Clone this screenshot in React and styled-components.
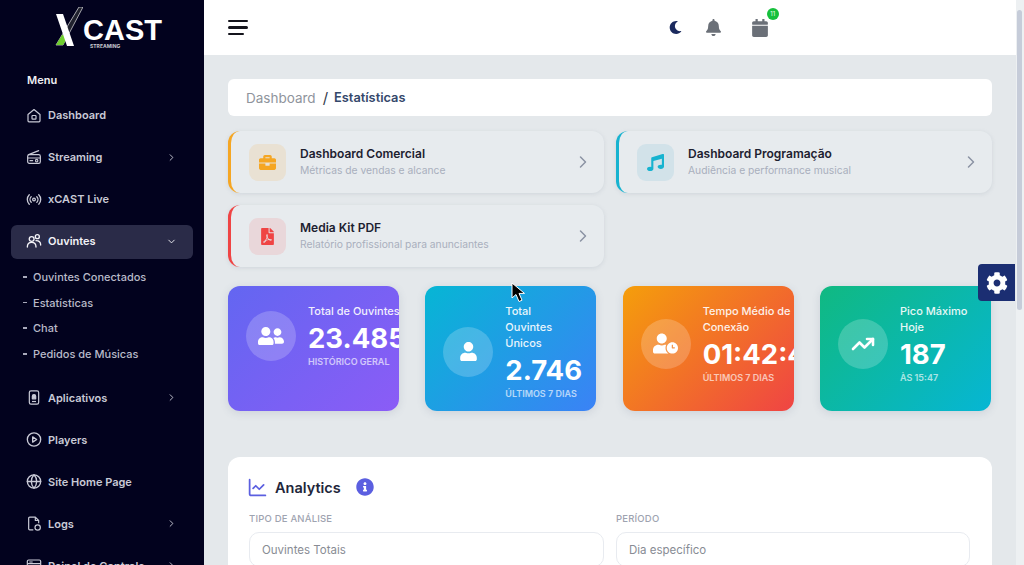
import React from "react";
import styled, { createGlobalStyle } from "styled-components";
import { FaBriefcase, FaMusic, FaFilePdf, FaUserFriends, FaUser, FaUserClock, FaCog, FaMoon, FaBell, FaCalendar, FaInfoCircle } from "react-icons/fa";
import { LuChevronRight, LuChevronDown, LuRadio, LuCirclePlay, LuGlobe, LuChartLine, LuTrendingUp } from "react-icons/lu";

const Global = createGlobalStyle`
  html, body { margin: 0; padding: 0; height: 565px; overflow: hidden; background: #e4e8eb; }
  body { font-family: Inter, "Noto Sans", sans-serif; }
  * { box-sizing: border-box; }
`;

const Page = styled.div`
  position: relative;
  display: flex;
  width: 1024px;
  height: 565px;
  overflow: hidden;
`;

const Sidebar = styled.aside`
  flex: 0 0 204px;
  height: 565px;
  overflow: hidden;
  background: #02021e;
  color: #c9cad6;
`;

const LogoWrap = styled.div`
  height: 66px;
  padding: 7px 0 0 55px;
  display: flex;
  align-items: flex-start;
`;
const LogoMark = styled.svg`
  flex: none;
  width: 28px;
  height: 40px;
`;
const LogoWords = styled.div`
  display: flex;
  flex-direction: column;
  margin: 11px 0 0 0;
`;
const LogoCast = styled.span`
  font: 700 29px/25px "Liberation Sans", sans-serif;
  color: #fff;
`;
const LogoSub = styled.span`
  font: 700 5px/6px Inter, sans-serif;
  color: #c8c8d0;
  margin-left: 7px;
`;

const MenuLabel = styled.div`
  height: 28px;
  padding-left: 27px;
  font-size: 11px;
  line-height: 28px;
  font-weight: 600;
  color: #f1f1f5;
`;

const NavItem = styled.div`
  height: ${p => (p.$active ? "34px" : "42px")};
  margin: ${p => (p.$active ? "5px" : "0")} 11px;
  padding: 0 16px ${p => (p.$active ? "2px" : "0")};
  display: flex;
  align-items: center;
  gap: 5px;
  border-radius: 6px;
  background: ${p => (p.$active ? "#2a2b48" : "transparent")};
  color: ${p => (p.$active ? "#f4f4f8" : "#c9cad6")};
  font-size: 11px;
  font-weight: 600;
  position: relative;
`;
const NavIcon = styled.span`
  flex: none;
  width: 16px;
  height: 18px;
  display: flex;
  align-items: center;
  justify-content: center;
  margin-left: -1px;
  margin-right: 1px;
`;
const NavText = styled.span`
  flex: 1;
  white-space: nowrap;
`;
const SubList = styled.div`
  padding: 0 0 10px 23px;
`;
const SubItem = styled.div`
  height: 25.7px;
  display: flex;
  align-items: center;
  gap: 6px;
  font-size: 11px;
  font-weight: 500;
  color: #b9bac9;
  &::before {
    content: "";
    width: 4px;
    height: 1.5px;
    background: #a9aabb;
  }
`;

const Main = styled.main`
  flex: 1;
  min-width: 0;
  height: 565px;
  overflow: hidden;
  background: #e4e8eb;
`;
const Topbar = styled.header`
  height: 55px;
  background: #fff;
  padding-left: 24px;
  display: flex;
  align-items: center;
  justify-content: space-between;
`;
const Burger = styled.div`
  width: 20px;
  display: flex;
  flex-direction: column;
  gap: 4px;
`;
const BurgerLine = styled.span`
  display: block;
  height: 2.4px;
  width: ${p => p.$w}px;
  background: #14141c;
  border-radius: 2px;
`;
const TopIcons = styled.div`
  display: flex;
  align-items: center;
  padding-right: 247px;
  position: relative;
`;
const TopIcon = styled.span`
  position: relative;
  display: flex;
  margin-left: ${p => p.$gap || 0}px;
  color: ${p => p.$color};
  font-size: ${p => p.$size}px;
`;
const Badge = styled.span`
  position: absolute;
  top: -11px;
  right: -10px;
  width: 12.5px;
  height: 12.5px;
  border-radius: 50%;
  background: #16c03c;
  color: #e8ffe8;
  font-size: 6px;
  line-height: 12.5px;
  text-align: center;
`;

const Content = styled.div`
  padding: 24px 24px 0 24px;
`;
const Breadcrumb = styled.nav`
  height: 37px;
  background: #fff;
  border-radius: 6px;
  padding-left: 18px;
  display: flex;
  align-items: center;
  gap: 7px;
`;
const CrumbMuted = styled.span`
  color: #8f949c;
  font-size: 13.5px;
`;
const CrumbSep = styled.span`
  color: #333a4a;
  font-size: 15px;
`;
const CrumbCurrent = styled.span`
  color: #34486b;
  font-size: 12.8px;
  font-weight: 600;
  margin-left: -1px;
`;

const ActionGrid = styled.div`
  margin-top: 15px;
  display: grid;
  grid-template-columns: 1fr 1fr;
  gap: 12px;
`;
const ActionCard = styled.div`
  height: 62px;
  display: flex;
  align-items: center;
  padding: 0 11px 0 18px;
  border-left: 3px solid ${p => p.$color};
  border-radius: 12px;
  background: #e7ebee;
  box-shadow: 0 1px 4px rgba(120, 135, 150, 0.18);
`;
const ActionIcon = styled.div`
  flex: none;
  width: 37px;
  height: 37px;
  border-radius: 9px;
  display: flex;
  align-items: center;
  justify-content: center;
  font-size: 17px;
  color: ${p => p.$color};
  background: ${p => p.$bg};
`;
const ActionText = styled.div`
  flex: 1;
  margin-left: 14px;
`;
const ActionTitle = styled.div`
  font-size: 12px;
  line-height: 16px;
  font-weight: 600;
  color: #1d2130;
`;
const ActionSub = styled.div`
  font-size: 10.3px;
  line-height: 16px;
  color: #a9afbd;
`;
const ActionArrow = styled.span`
  display: flex;
  color: #8b93a3;
  font-size: 20px;
`;

const StatGrid = styled.div`
  margin-top: 19px;
  display: grid;
  grid-template-columns: repeat(4, 171px);
  gap: 26.33px;
`;
const StatCard = styled.div`
  height: 125px;
  padding: 17px 18px;
  border-radius: 12px;
  overflow: hidden;
  color: #fff;
  background: ${p => p.$bg};
  box-shadow: 0 2px 8px rgba(90, 100, 130, 0.16);
`;
const StatRow = styled.div`
  display: flex;
  align-items: center;
  gap: 12px;
`;
const StatIcon = styled.div`
  flex: none;
  width: 50px;
  height: 50px;
  border-radius: 50%;
  display: flex;
  align-items: center;
  justify-content: center;
  background: rgba(255, 255, 255, 0.2);
`;
const StatBody = styled.div`
  flex: none;
  width: ${p => p.$w}px;
`;
const StatLabel = styled.div`
  margin-bottom: 1px;
  font-size: 11px;
  line-height: 16px;
  font-weight: 500;
  opacity: 0.9;
  white-space: ${p => (p.$nowrap ? "nowrap" : "normal")};
`;
const StatValue = styled.div`
  font-size: 27.5px;
  line-height: 36px;
  font-weight: 700;
  white-space: nowrap;
`;
const StatNote = styled.div`
  font-size: 9px;
  line-height: 12px;
  font-weight: 600;
  opacity: 0.65;
  white-space: nowrap;
`;

const Analytics = styled.section`
  margin-top: 46px;
  height: 140px;
  padding: 20px 21px;
  border-radius: 12px 12px 0 0;
  background: #fff;
`;
const AnalyticsHead = styled.div`
  height: 20px;
  display: flex;
  align-items: center;
  color: #5b5fe0;
  & > svg:first-child {
    margin-left: -2px;
  }
`;
const AnalyticsTitle = styled.h2`
  margin: 0 15px 0 7px;
  font-size: 14.5px;
  font-weight: 600;
  color: #22263a;
`;
const Fields = styled.div`
  margin-top: 14px;
  display: grid;
  grid-template-columns: 355px 354px;
  gap: 12px;
`;
const FieldLabel = styled.div`
  font-size: 9.5px;
  line-height: 16px;
  font-weight: 500;
  letter-spacing: 0.2px;
  color: #9ea3b0;
  text-transform: uppercase;
`;
const Select = styled.div`
  margin-top: 5px;
  height: 35px;
  padding: 0 12px;
  display: flex;
  align-items: center;
  border: 1px solid #e8ebf0;
  border-radius: 10px;
  font-size: 11.5px;
  color: #888c94;
`;

const Scrollbar = styled.div`
  flex: 0 0 8px;
  height: 565px;
  padding: 10px 2px 0 1px;
  background: #edf0f2;
`;
const ScrollThumb = styled.div`
  height: 300px;
  border-radius: 3px;
  background: #c6ccd9;
`;

const GearButton = styled.div`
  position: absolute;
  left: 978px;
  top: 264px;
  width: 37px;
  height: 37px;
  border-radius: 4px 0 0 4px;
  background: #1b2e72;
  color: #fff;
  font-size: 22px;
  display: flex;
  align-items: center;
  justify-content: center;
`;
const Cursor = styled.svg`
  position: absolute;
  left: 511px;
  top: 282px;
  width: 15px;
  height: 21px;
`;

const HomeIcon = () => (
  <svg width="17" height="17" viewBox="0 0 24 24" fill="none" stroke="currentColor" strokeWidth="1.8" strokeLinejoin="round">
    <path d="M3 10.5 12 3l9 7.5V20a1.5 1.5 0 0 1-1.5 1.5h-15A1.5 1.5 0 0 1 3 20z" />
    <rect x="9" y="12" width="6" height="5.5" rx="1" />
  </svg>
);
const RadioSetIcon = () => (
  <svg width="18" height="18" viewBox="0 0 24 24" fill="none" stroke="currentColor" strokeWidth="1.8" strokeLinejoin="round" strokeLinecap="round">
    <path d="M4 8.5 19 2.5" />
    <rect x="2.5" y="8.5" width="19" height="13" rx="2.5" />
    <path d="M2.5 13.5h19M6 17.5h4" />
    <circle cx="16" cy="17.5" r="1.8" />
  </svg>
);
const ListenersIcon = () => (
  <svg width="18" height="18" viewBox="0 0 24 24" fill="none" stroke="currentColor" strokeWidth="2" strokeLinecap="round">
    <circle cx="8.5" cy="9" r="3.6" />
    <circle cx="17" cy="5.5" r="3" />
    <path d="M2 21c0-4.5 2.8-7 6.5-7s6.5 2.5 6.5 7M15 11.5c4 0 7 2.2 7 6.5" />
  </svg>
);
const AppIcon = () => (
  <svg width="17" height="17" viewBox="0 0 24 24" fill="none" stroke="currentColor" strokeWidth="1.8" strokeLinejoin="round">
    <rect x="5" y="2" width="14" height="20" rx="2.5" />
    <path d="M9.5 14v-4a2.5 2.5 0 0 1 5 0v4z" fill="currentColor" />
    <path d="M9 18h6" />
  </svg>
);
const LogIcon = () => (
  <svg width="17" height="17" viewBox="0 0 24 24" fill="none" stroke="currentColor" strokeWidth="1.8" strokeLinejoin="round">
    <path d="M11 21.5H5.5a1.5 1.5 0 0 1-1.5-1.5V4a1.5 1.5 0 0 1 1.5-1.5H14l5 5v4" />
    <path d="M14 2.5v5h5" />
    <circle cx="17.5" cy="18" r="4" />
  </svg>
);
const PanelIcon = () => (
  <svg width="18" height="18" viewBox="0 0 24 24" fill="none" stroke="currentColor" strokeWidth="1.8">
    <rect x="2" y="3" width="20" height="18" rx="2" />
    <path d="M2 8.5h20M5 6h5" />
  </svg>
);

const nav = [
  { label: "Dashboard", icon: <HomeIcon /> },
  { label: "Streaming", icon: <RadioSetIcon />, more: true },
  { label: "xCAST Live", icon: <LuRadio size={17} /> },
];
const nav2 = [
  { label: "Aplicativos", icon: <AppIcon />, more: true },
  { label: "Players", icon: <LuCirclePlay size={17} /> },
  { label: "Site Home Page", icon: <LuGlobe size={17} /> },
  { label: "Logs", icon: <LogIcon />, more: true },
  { label: "Painel de Controle", icon: <PanelIcon />, more: true },
];
const subs = ["Ouvintes Conectados", "Estatísticas", "Chat", "Pedidos de Músicas"];

const actions = [
  { title: "Dashboard Comercial", sub: "Métricas de vendas e alcance", color: "#f5a623", bg: "#e9e1d3", icon: <FaBriefcase /> },
  { title: "Dashboard Programação", sub: "Audiência e performance musical", color: "#17b3d0", bg: "#d2e2e9", icon: <FaMusic /> },
  { title: "Media Kit PDF", sub: "Relatório profissional para anunciantes", color: "#ef4444", bg: "#e9d7da", icon: <FaFilePdf /> },
];

const stats = [
  { bg: "linear-gradient(135deg,#6366f1,#8b5cf6)", icon: <FaUserFriends size={26} />, label: "Total de Ouvintes", value: "23.485", note: "HISTÓRICO GERAL", w: 100, nowrap: true },
  { bg: "linear-gradient(135deg,#06b6d4,#3b82f6)", icon: <FaUser size={19} />, label: "Total Ouvintes Únicos", value: "2.746", note: "ÚLTIMOS 7 DIAS", w: 70 },
  { bg: "linear-gradient(135deg,#f59e0b,#ef4444)", icon: <FaUserClock size={25} />, label: "Tempo Médio de Conexão", value: "01:42:44", note: "ÚLTIMOS 7 DIAS", w: 92 },
  { bg: "linear-gradient(135deg,#10b981,#06b6d4)", icon: <LuTrendingUp size={24} strokeWidth={2.6} />, label: "Pico Máximo Hoje", value: "187", note: "ÀS 15:47", w: 76 },
];

const NavRow = ({ item }) => (
  <NavItem>
    <NavIcon>{item.icon}</NavIcon>
    <NavText>{item.label}</NavText>
    {item.more && <LuChevronRight size={11} />}
  </NavItem>
);

export default function App() {
  return (
    <Page>
      <Global />
      <Sidebar>
        <LogoWrap>
          <LogoMark viewBox="0 0 28 40">
            <polygon points="24,0 28,0 8,38 1,38" fill="#20222e" stroke="#e6e6e6" strokeWidth="0.7" />
            <polygon points="7,28 14,28 8,38 1,38" fill="#6fce2e" />
            <polygon points="1,7 8,7 19,39 12,39" fill="#fff" />
          </LogoMark>
          <LogoWords>
            <LogoCast>CAST</LogoCast>
            <LogoSub>STREAMING</LogoSub>
          </LogoWords>
        </LogoWrap>
        <MenuLabel>Menu</MenuLabel>
        {nav.map(n => <NavRow key={n.label} item={n} />)}
        <NavItem $active>
          <NavIcon><ListenersIcon /></NavIcon>
          <NavText>Ouvintes</NavText>
          <LuChevronDown size={11} />
        </NavItem>
        <SubList>
          {subs.map(s => <SubItem key={s}>{s}</SubItem>)}
        </SubList>
        {nav2.map(n => <NavRow key={n.label} item={n} />)}
      </Sidebar>

      <Main>
        <Topbar>
          <Burger>
            <BurgerLine $w={20} />
            <BurgerLine $w={20} />
            <BurgerLine $w={16} />
          </Burger>
          <TopIcons>
            <TopIcon $color="#1b2a5e" $size={13}><FaMoon /></TopIcon>
            <TopIcon $gap={23} $color="#6b7078" $size={17}><FaBell /></TopIcon>
            <TopIcon $gap={29} $color="#6b7078" $size={18}>
              <FaCalendar />
              <Badge>11</Badge>
            </TopIcon>
          </TopIcons>
        </Topbar>
        <Content>
          <Breadcrumb>
            <CrumbMuted>Dashboard</CrumbMuted>
            <CrumbSep>/</CrumbSep>
            <CrumbCurrent>Estatísticas</CrumbCurrent>
          </Breadcrumb>
          <ActionGrid>
            {actions.map(a => (
              <ActionCard key={a.title} $color={a.color}>
                <ActionIcon $color={a.color} $bg={a.bg}>{a.icon}</ActionIcon>
                <ActionText>
                  <ActionTitle>{a.title}</ActionTitle>
                  <ActionSub>{a.sub}</ActionSub>
                </ActionText>
                <ActionArrow><LuChevronRight strokeWidth={1.8} /></ActionArrow>
              </ActionCard>
            ))}
          </ActionGrid>
          <StatGrid>
            {stats.map(s => (
              <StatCard key={s.label} $bg={s.bg}>
                <StatRow>
                  <StatIcon>{s.icon}</StatIcon>
                  <StatBody $w={s.w}>
                    <StatLabel $nowrap={s.nowrap}>{s.label}</StatLabel>
                    <StatValue>{s.value}</StatValue>
                    <StatNote>{s.note}</StatNote>
                  </StatBody>
                </StatRow>
              </StatCard>
            ))}
          </StatGrid>
          <Analytics>
            <AnalyticsHead>
              <LuChartLine size={21} />
              <AnalyticsTitle>Analytics</AnalyticsTitle>
              <FaInfoCircle size={18} />
            </AnalyticsHead>
            <Fields>
              <div>
                <FieldLabel>Tipo de análise</FieldLabel>
                <Select>Ouvintes Totais</Select>
              </div>
              <div>
                <FieldLabel>Período</FieldLabel>
                <Select>Dia específico</Select>
              </div>
            </Fields>
          </Analytics>
        </Content>
      </Main>
      <Scrollbar><ScrollThumb /></Scrollbar>

      <GearButton><FaCog /></GearButton>
      <Cursor viewBox="0 0 15 21">
        <path d="M1 1v15l4-3.5 3 7 3-1.3-3-6.8h5.5z" fill="#000" stroke="#fff" strokeWidth="1" />
      </Cursor>
    </Page>
  );
}
